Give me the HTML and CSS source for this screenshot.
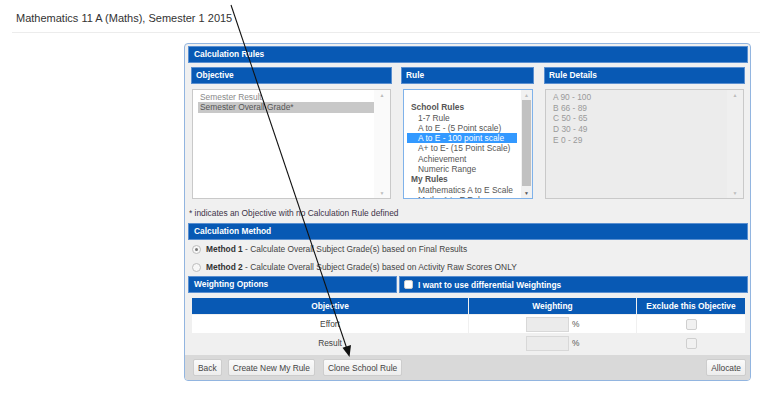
FILE: index.html
```html
<!DOCTYPE html>
<html lang="en">
<head>
    <meta charset="UTF-8">
    <title>Calculation Rules</title>
    <link rel="stylesheet" href="styles.css">
</head>
<body>
    <h1 class="page-title">Mathematics 11 A (Maths), Semester 1 2015</h1>

    <div class="dialog">
        <div class="bar">Calculation Rules</div>

        <div class="panels">
            <div class="panel">
                <div class="panel-head">Objective</div>
                <div class="listbox">
                    <div class="list-items">
                        <div class="item dim">Semester Result</div>
                        <div class="item picked-gray">Semester Overall Grade*</div>
                    </div>
                    <div class="scroll">
                        <span class="arrow">&#9650;</span>
                        <span class="track"></span>
                        <span class="arrow">&#9660;</span>
                    </div>
                </div>
            </div>

            <div class="panel">
                <div class="panel-head">Rule</div>
                <div class="listbox focused">
                    <div class="list-items rules">
                        <div class="item">&nbsp;</div>
                        <div class="item group">School Rules</div>
                        <div class="item sub">1-7 Rule</div>
                        <div class="item sub">A to E - (5 Point scale)</div>
                        <div class="item sub picked">A to E - 100 point scale</div>
                        <div class="item sub">A+ to E- (15 Point Scale)</div>
                        <div class="item sub">Achievement</div>
                        <div class="item sub">Numeric Range</div>
                        <div class="item group">My Rules</div>
                        <div class="item sub">Mathematics A to E Scale</div>
                        <div class="item sub">Maths A to E Rule</div>
                    </div>
                    <div class="scroll">
                        <span class="arrow">&#9650;</span>
                        <span class="track"><span class="thumb"></span></span>
                        <span class="arrow dark">&#9660;</span>
                    </div>
                </div>
            </div>

            <div class="panel">
                <div class="panel-head">Rule Details</div>
                <div class="listbox disabled">
                    <div class="list-items details">
                        <div class="item">A 90 - 100</div>
                        <div class="item">B 66 - 89</div>
                        <div class="item">C 50 - 65</div>
                        <div class="item">D 30 - 49</div>
                        <div class="item">E 0 - 29</div>
                    </div>
                    <div class="scroll">
                        <span class="arrow">&#9650;</span>
                        <span class="track"></span>
                        <span class="arrow">&#9660;</span>
                    </div>
                </div>
            </div>
        </div>

        <p class="note">* indicates an Objective with no Calculation Rule defined</p>

        <div class="bar">Calculation Method</div>
        <label class="method"><span class="radio checked"></span><b>Method 1</b>&nbsp;- Calculate Overall Subject Grade(s) based on Final Results</label>
        <label class="method"><span class="radio"></span><b>Method 2</b>&nbsp;- Calculate Overall Subject Grade(s) based on Activity Raw Scores ONLY</label>

        <div class="split">
            <div class="split-left">Weighting Options</div>
            <div class="split-right"><span class="box"></span>I want to use differential Weightings</div>
        </div>

        <table class="weights">
            <thead>
                <tr>
                    <th class="col-obj">Objective</th>
                    <th class="col-w">Weighting</th>
                    <th class="col-ex">Exclude this Objective</th>
                </tr>
            </thead>
            <tbody>
                <tr class="odd">
                    <td>Effort</td>
                    <td><span class="num"></span><span class="pct">%</span></td>
                    <td><span class="check"></span></td>
                </tr>
                <tr>
                    <td>Result</td>
                    <td><span class="num"></span><span class="pct">%</span></td>
                    <td><span class="check"></span></td>
                </tr>
            </tbody>
        </table>

        <div class="buttons">
            <div class="btn-group">
                <button>Back</button>
                <button>Create New My Rule</button>
                <button class="wide-gap">Clone School Rule</button>
            </div>
            <button>Allocate</button>
        </div>
    </div>

    <!-- annotation arrow drawn over the screenshot -->
    <svg class="annotation" width="766" height="394" viewBox="0 0 766 394">
        <line x1="231" y1="5" x2="347" y2="349" stroke="#111" stroke-width="1.1"/>
        <polygon points="349.5,357 351,345 342.5,347.8" fill="#111"/>
    </svg>
</body>
</html>
```

FILE: styles.css
```css
body {
    margin: 0;
    background: #fff;
    font-family: 'Liberation Sans', Arial, sans-serif;
    color: #333;
    position: relative;
    width: 766px;
    height: 394px;
    overflow: hidden;
}
.page-title {
    font-size: 11px;
    line-height: 13px;
    font-weight: normal;
    margin: 0 6px 0 12px;
    padding: 12px 4px 7px;
    border-bottom: 1px solid #ececec;
}
.dialog {
    margin: 10px 0 0 184px;
    width: 561px;
    border: 1px solid #92b5e0;
    border-radius: 4px;
    background: #f0f0f0;
    padding: 2px 2px 0 2px;
    font-size: 8.4px;
}
.bar {
    background: #0859b4;
    color: #fff;
    font-weight: bold;
    height: 17px;
    line-height: 15px;
    padding-left: 5px;
    border: 1px solid #5a8fd0;
    margin-left: 1px;
    box-sizing: border-box;
}
.panels {
    display: grid;
    grid-template-columns: 201px 133px 202px;
    column-gap: 9px;
    padding: 4px 0 0 4px;
}
.panels .panel:last-child {
    margin-left: 1px;
}
.panel-head {
    background: #0859b4;
    color: #fff;
    font-weight: bold;
    height: 17px;
    line-height: 15px;
    padding-left: 4px;
    border: 1px solid #5a8fd0;
    box-sizing: border-box;
}
.listbox {
    margin: 5px 1px 0;
    height: 110px;
    box-sizing: border-box;
    border: 1px solid #c9c9c9;
    background: #fff;
    display: flex;
    overflow: hidden;
}
.listbox.focused {
    border-color: #7fb2ea;
    margin-left: 2px;
}
.listbox.disabled {
    background: #ececec;
}
.list-items {
    flex: 1;
    padding: 2px 0 0 5px;
    line-height: 10.3px;
    overflow: hidden;
    white-space: nowrap;
    min-width: 0;
}
.item {
    padding-left: 2px;
}
.item.dim {
    color: #8a8a8a;
}
.item.picked-gray {
    background: #c8c8c8;
    color: #555;
}
.rules {
    padding-left: 3px;
    color: #555;
}
.rules .group {
    font-weight: bold;
    padding-left: 4px;
}
.rules .sub {
    padding-left: 11px;
}
.rules .picked {
    background: #3399ff;
    color: #fff;
    margin-right: 4px;
}
.details {
    color: #9a9a9a;
    padding-left: 5px;
    line-height: 10.7px;
}
.scroll {
    width: 16px;
    display: flex;
    flex-direction: column;
    align-items: center;
    background: #fafafa;
}
.disabled .scroll {
    background: #efefef;
}
.arrow {
    font-size: 5px;
    color: #bcbcbc;
    height: 10px;
    line-height: 10px;
}
.arrow.dark {
    color: #555;
}
.track {
    flex: 1;
    width: 100%;
    display: flex;
    justify-content: center;
}
.focused .scroll {
    width: 11px;
    background: #f1f1f1;
}
.thumb {
    width: 9px;
    margin: 0 0 2px;
    background: #c1c1c1;
}
.note {
    margin: 8px 0 4px 2px;
    color: #3d3348;
    line-height: 12px;
}
.method {
    display: flex;
    align-items: center;
    height: 18px;
    padding-left: 5px;
    color: #444;
}
.method b {
    color: #333;
}
.radio {
    width: 9px;
    height: 9px;
    border-radius: 50%;
    border: 1px solid #bdbdbd;
    background: #f7f7f7;
    margin-right: 5px;
    box-sizing: border-box;
    display: inline-flex;
    align-items: center;
    justify-content: center;
}
.radio.checked::after {
    content: "";
    width: 3px;
    height: 3px;
    border-radius: 50%;
    background: #777;
}
.split {
    display: flex;
    gap: 2px;
    margin-left: 1px;
    height: 17px;
    color: #fff;
    font-weight: bold;
}
.split-left {
    width: 209px;
    background: #0859b4;
    padding-left: 5px;
    line-height: 15px;
    border: 1px solid #5a8fd0;
    box-sizing: border-box;
}
.split-right {
    flex: 1;
    background: #0859b4;
    border: 1px solid #5a8fd0;
    display: flex;
    align-items: center;
    padding-left: 4px;
}
.box {
    width: 9px;
    height: 9px;
    background: #fff;
    border: 1px solid #ccc;
    border-radius: 2px;
    margin-right: 5px;
    box-sizing: border-box;
}
.weights {
    margin: 4px 0 2px 4px;
    width: 555px;
    border-collapse: collapse;
    text-align: center;
}
.weights th {
    background: #0859b4;
    color: #fff;
    font-weight: bold;
    height: 16px;
    padding: 0;
    border: 1px solid #f0f0f0;
}
.weights td {
    height: 18px;
    padding: 0;
    border: 1px solid #f0f0f0;
    color: #444;
}
.weights tr.odd td {
    background: #fff;
}
.col-obj {
    width: 276px;
}
.col-w {
    width: 167px;
}
.num {
    display: inline-block;
    width: 41px;
    height: 13px;
    background: #ebebeb;
    border: 1px solid #d8d8d8;
    vertical-align: middle;
}
.pct {
    display: inline-block;
    width: 11px;
    text-align: right;
    vertical-align: middle;
    color: #555;
}
.check {
    display: inline-block;
    width: 9px;
    height: 9px;
    border: 1px solid #cfcfcf;
    border-radius: 2px;
    background: #f1f1f1;
    vertical-align: middle;
}
.buttons {
    margin: 0 -2px;
    background: #d9d9d9;
    display: flex;
    justify-content: space-between;
    padding: 4px 4px 4px 8px;
    border-radius: 0 0 3px 3px;
}
.btn-group {
    display: flex;
    gap: 6px;
}
button {
    font-family: 'Liberation Sans', Arial, sans-serif;
    font-size: 8.4px;
    color: #444;
    background: linear-gradient(#fafafa, #ededed);
    border: 1px solid #cdcdcd;
    border-radius: 2px;
    height: 17px;
    padding: 0 4px;
    cursor: pointer;
}
button.wide-gap {
    margin-left: 2px;
}
.annotation {
    position: absolute;
    left: 0;
    top: 0;
    pointer-events: none;
}
```
